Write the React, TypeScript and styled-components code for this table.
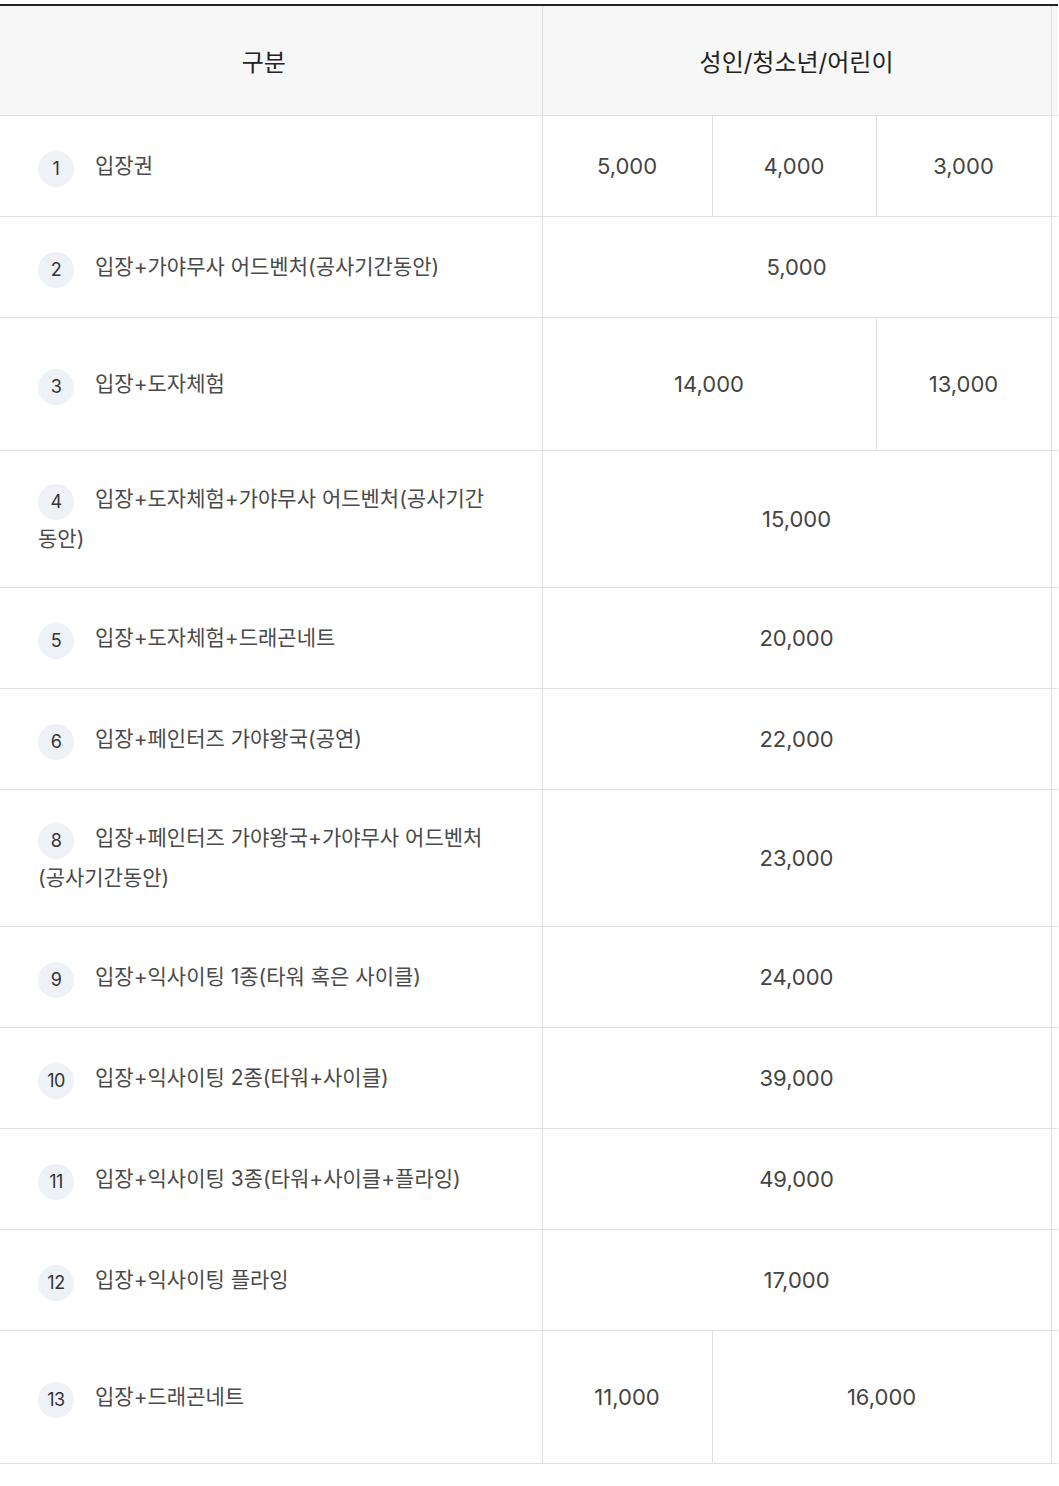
import React from "react";
import styled, { createGlobalStyle } from "styled-components";

const GlobalStyle = createGlobalStyle`
  html, body {
    margin: 0;
    padding: 0;
    background: #ffffff;
    overflow-x: hidden;
  }
  body {
    font-family: Inter, "Noto Sans CJK KR", "Noto Sans", sans-serif;
  }
`;

const Page = styled.div`
  padding-top: 4px;
  width: 1058px;
`;

const Scroller = styled.div`
  width: 1058px;
  overflow: hidden;
  border-top: 2px solid #222222;
`;

const Table = styled.table`
  width: 1251px;
  table-layout: fixed;
  border-collapse: collapse;
  font-family: Inter, "Noto Sans CJK KR", sans-serif;
`;

const HeadCell = styled.th<{ $shift?: boolean }>`
  height: 109px;
  padding: 0 ${(p) => (p.$shift ? "14px" : "0")} 0 0;
  background: #f7f7f7;
  border-bottom: 1px solid #e0e0e0;
  border-left: 1px solid #e0e0e0;
  font-size: 24px;
  font-weight: 400;
  color: #222222;
  text-align: center;
  vertical-align: middle;
  letter-spacing: 0;
  &:first-child {
    border-left: none;
  }
`;

const Row = styled.tr``;

const NameCell = styled.td<{ $tall?: boolean }>`
  height: ${(p) => (p.$tall ? "76px" : "44px")};
  padding: 28px 48px 28px 38px;
  border-bottom: 1px solid #e0e0e0;
  font-size: 21px;
  line-height: 40px;
  color: #4a4a4a;
  letter-spacing: 0;
  vertical-align: middle;
  text-align: left;
`;

const Badge = styled.span`
  display: inline-flex;
  align-items: center;
  justify-content: center;
  width: 36px;
  height: 36px;
  margin-right: 21px;
  border-radius: 50%;
  background: #eef2f7;
  color: #333333;
  font-size: 18px;
  letter-spacing: -0.5px;
  line-height: 1;
  vertical-align: middle;
  transform: translateY(2px);
`;

const PriceCell = styled.td`
  border-bottom: 1px solid #e0e0e0;
  border-left: 1px solid #e0e0e0;
  font-size: 22px;
  color: #444444;
  text-align: center;
  vertical-align: middle;
  letter-spacing: 0;
  padding: 0;
`;

const EmptyCell = styled.td`
  border-bottom: 1px solid #e0e0e0;
  border-left: 1px solid #e0e0e0;
`;

type Price = { v: string; span: number };

type Item = {
  n: string;
  name: string;
  prices: Price[];
  tall?: boolean;
};

const items: Item[] = [
  { n: "1", name: "입장권", prices: [{ v: "5,000", span: 1 }, { v: "4,000", span: 1 }, { v: "3,000", span: 1 }] },
  { n: "2", name: "입장+가야무사 어드벤처(공사기간동안)", prices: [{ v: "5,000", span: 3 }] },
  { n: "3", name: "입장+도자체험", prices: [{ v: "14,000", span: 2 }, { v: "13,000", span: 1 }], tall: true },
  { n: "4", name: "입장+도자체험+가야무사 어드벤처(공사기간동안)", prices: [{ v: "15,000", span: 3 }] },
  { n: "5", name: "입장+도자체험+드래곤네트", prices: [{ v: "20,000", span: 3 }] },
  { n: "6", name: "입장+페인터즈 가야왕국(공연)", prices: [{ v: "22,000", span: 3 }] },
  { n: "8", name: "입장+페인터즈 가야왕국+가야무사 어드벤처(공사기간동안)", prices: [{ v: "23,000", span: 3 }] },
  { n: "9", name: "입장+익사이팅 1종(타워 혹은 사이클)", prices: [{ v: "24,000", span: 3 }] },
  { n: "10", name: "입장+익사이팅 2종(타워+사이클)", prices: [{ v: "39,000", span: 3 }] },
  { n: "11", name: "입장+익사이팅 3종(타워+사이클+플라잉)", prices: [{ v: "49,000", span: 3 }] },
  { n: "12", name: "입장+익사이팅 플라잉", prices: [{ v: "17,000", span: 3 }] },
  { n: "13", name: "입장+드래곤네트", prices: [{ v: "11,000", span: 1 }, { v: "16,000", span: 2 }], tall: true },
];

export default function App() {
  return (
    <Page>
      <GlobalStyle />
      <Scroller>
        <Table>
          <colgroup>
            <col style={{ width: 542 }} />
            <col style={{ width: 170 }} />
            <col style={{ width: 164 }} />
            <col style={{ width: 175 }} />
            <col style={{ width: 200 }} />
          </colgroup>
          <thead>
            <tr>
              <HeadCell $shift>구분</HeadCell>
              <HeadCell colSpan={3}>성인/청소년/어린이</HeadCell>
              <HeadCell />
            </tr>
          </thead>
          <tbody>
            {items.map((it) => (
              <Row key={it.n}>
                <NameCell $tall={it.tall}>
                  <Badge>{it.n}</Badge>
                  {it.name}
                </NameCell>
                {it.prices.map((p, i) => (
                  <PriceCell key={i} colSpan={p.span}>
                    {p.v}
                  </PriceCell>
                ))}
                <EmptyCell />
              </Row>
            ))}
          </tbody>
        </Table>
      </Scroller>
    </Page>
  );
}
